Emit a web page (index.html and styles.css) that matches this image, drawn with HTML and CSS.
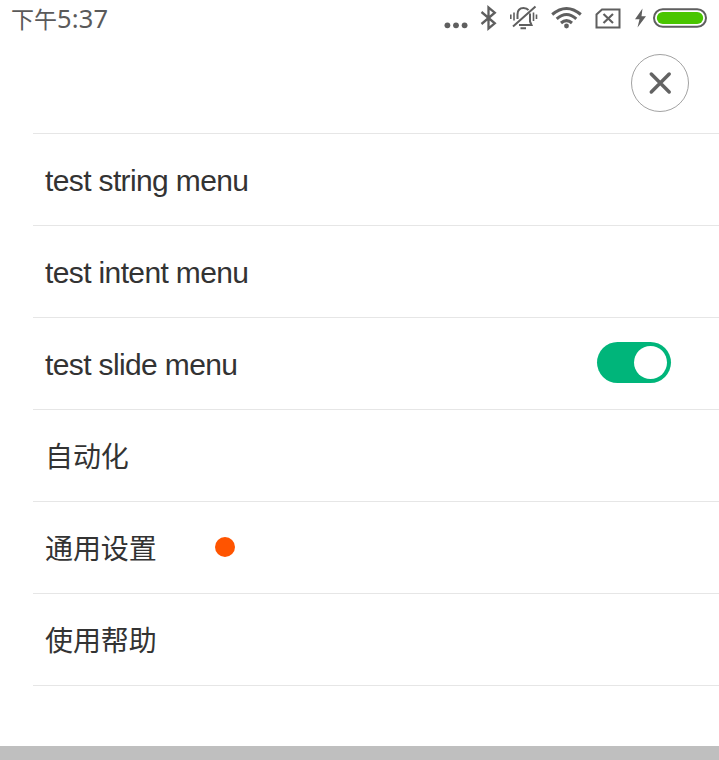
FILE: index.html
```
<!DOCTYPE html>
<html lang="zh-CN">
<head>
<meta charset="utf-8">
<title>Menu</title>
<link rel="stylesheet" href="styles.css">
</head>
<body>
<div class="screen">
  <header class="status">
    <div class="time"><span class="period">下午</span><span class="clock">5:37</span></div>
    <svg class="status-icons" width="279" height="40" viewBox="440 0 279 40" fill="none" stroke="#5f5f5f" stroke-width="2">
      <g fill="#5f5f5f" stroke="none"><circle cx="447.4" cy="25.3" r="2.9"/><circle cx="456" cy="25.3" r="2.9"/><circle cx="464.6" cy="25.3" r="2.9"/></g>
      <path stroke-width="2.3" d="M481.500 12 494.800 23.300 488.500 28.500V7.500L494.800 12.700 481.500 24"/>
      <path d="M517.500 19V14.500c0-4.500 2.300-6.500 6-6.500 2.300 0 4 .800 5 2.200M530 13.500v8l1.500 3.500H519M520.500 28.200h5.500M535.500 6.500 513 26.500"/>
      <path stroke-width="1.600" d="M514 12.500v8M510.800 14.500v4.500M533.500 12.500v8.500M536.500 14.500v4.500"/>
      <g stroke-width="3"><path d="M552.200 14.500Q566.500 2.500 580.800 14.500M556.700 18.800Q566.500 10.200 576.300 18.800M561 23Q566.500 18.200 572 23"/></g>
      <circle cx="566.500" cy="26" r="2.400" fill="#5f5f5f" stroke="none"/>
      <path d="M602 9.500H619.500V27.500H596.500V14.500Z"/>
      <path stroke-width="2.200" d="M603.500 14 613 23M613 14 603.500 23"/>
      <path fill="#5f5f5f" stroke="none" d="M642.500 8.500 635 19.300h4.500L637.500 27.500 646 16.300h-4.500Z"/>
      <rect x="654" y="9.200" width="52" height="17.600" rx="8.800"/>
      <rect x="656.800" y="12" width="46.400" height="12" rx="6" fill="#49c500" stroke="none"/>
    </svg>
  </header>
  <div class="toolbar">
    <button class="close" aria-label="关闭"><svg width="58" height="58" viewBox="0 0 58 58"><circle cx="29" cy="29" r="28.500" fill="none" stroke="#8a8a8a" stroke-width=".8"/><path d="M20.300 20.100 38.200 37.900M38.200 20.100 20.300 37.900" stroke="#636363" stroke-width="3.500" stroke-linecap="round"/></svg></button>
  </div>
  <ul class="menu">
    <li class="item">test string menu</li>
    <li class="item">test intent menu</li>
    <li class="item"><span>test slide menu</span><span class="switch"><span class="knob"></span></span></li>
    <li class="item cjk">自动化</li>
    <li class="item cjk">通用设置<span class="dot"></span></li>
    <li class="item cjk">使用帮助</li>
  </ul>
  <div class="bottom"></div>
</div>
</body>
</html>
```
FILE: styles.css
```
* { box-sizing: border-box; }
body { margin: 0; background: #fff; }
.screen {
  width: 719px;
  height: 760px;
  display: flex;
  flex-direction: column;
  overflow: hidden;
  color: #333;
  font-family: "Liberation Sans", "Noto Sans CJK SC", sans-serif;
}
.status {
  height: 40px;
  display: flex;
  justify-content: space-between;
  padding-left: 11px;
  color: #5a5a5a;
}
.time { display: flex; height: 36px; white-space: nowrap; }
.period { width: 46px; font: 23px/36px "Noto Sans CJK SC", sans-serif; }
.clock { font: 25.5px/37px "Noto Sans", sans-serif; letter-spacing: 0.2px; }
.status-icons { display: block; }
.toolbar {
  height: 93px;
  display: flex;
  justify-content: flex-end;
  align-items: flex-start;
  padding: 14px 30px 0 0;
}
.close { padding: 0; border: 0; background: none; width: 58px; height: 58px; }
.close svg { display: block; }
.menu {
  list-style: none;
  margin: 0 0 0 33px;
  padding: 0;
  border-bottom: 1px solid #e6e6e6;
}
.item {
  height: 92px;
  display: flex;
  align-items: center;
  border-top: 1px solid #e6e6e6;
  padding: 2px 48px 0 12px;
  font-size: 30px;
  letter-spacing: -0.63px;
}
.cjk {
  padding-top: 0;
  padding-bottom: 2px;
  font-family: "Noto Sans CJK SC", sans-serif;
  font-size: 28px;
  letter-spacing: -0.1px;
}
.switch {
  width: 74px;
  height: 41px;
  margin: -5px 0 0 auto;
  padding: 4px;
  border-radius: 21px;
  background: #00b57a;
  display: flex;
  justify-content: flex-end;
}
.knob { width: 33px; height: 33px; border-radius: 50%; background: #fff; }
.dot { width: 20px; height: 20px; margin-left: 58px; border-radius: 50%; background: #ff5400; }
.bottom { height: 14px; margin-top: auto; background: #bfbfbf; }
```
